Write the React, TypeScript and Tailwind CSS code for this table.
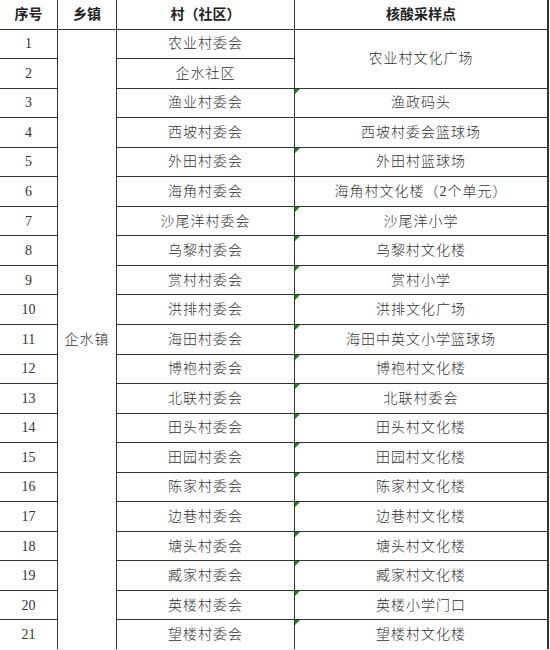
import React from "react";

const rows: { n: number; village: string; site?: string; tri?: boolean }[] = [
  { n: 1, village: "农业村委会" },
  { n: 2, village: "企水社区" },
  { n: 3, village: "渔业村委会", site: "渔政码头", tri: true },
  { n: 4, village: "西坡村委会", site: "西坡村委会篮球场" },
  { n: 5, village: "外田村委会", site: "外田村篮球场", tri: true },
  { n: 6, village: "海角村委会", site: "海角村文化楼（2个单元）" },
  { n: 7, village: "沙尾洋村委会", site: "沙尾洋小学", tri: true },
  { n: 8, village: "乌黎村委会", site: "乌黎村文化楼", tri: true },
  { n: 9, village: "赏村村委会", site: "赏村小学", tri: true },
  { n: 10, village: "洪排村委会", site: "洪排文化广场", tri: true },
  { n: 11, village: "海田村委会", site: "海田中英文小学篮球场", tri: true },
  { n: 12, village: "博袍村委会", site: "博袍村文化楼", tri: true },
  { n: 13, village: "北联村委会", site: "北联村委会", tri: true },
  { n: 14, village: "田头村委会", site: "田头村文化楼", tri: true },
  { n: 15, village: "田园村委会", site: "田园村文化楼", tri: true },
  { n: 16, village: "陈家村委会", site: "陈家村文化楼", tri: true },
  { n: 17, village: "边巷村委会", site: "边巷村文化楼", tri: true },
  { n: 18, village: "塘头村委会", site: "塘头村文化楼", tri: true },
  { n: 19, village: "臧家村委会", site: "臧家村文化楼", tri: true },
  { n: 20, village: "英楼村委会", site: "英楼小学门口", tri: true },
  { n: 21, village: "望楼村委会", site: "望楼村文化楼", tri: true },
];

const font = {
  fontFamily: '"Liberation Serif", "Noto Sans CJK SC", serif',
};

function Tri() {
  return (
    <span className="absolute left-0 top-0 h-0 w-0 border-l-[5px] border-b-[5px] border-l-[#138a13] border-b-transparent" />
  );
}

const cell = "flex items-center justify-center bg-white text-[14px] font-light tracking-[1px] text-[#333]";

export default function App() {
  return (
    <div className="w-[550px] h-[650px] bg-white" style={font}>
      <div className="grid h-[649px] w-[549px] grid-cols-[57px_58px_177px_252px] grid-rows-[repeat(22,minmax(0,1fr))] gap-px bg-[#333]">
        <div className="flex items-center justify-center bg-white text-[14px] font-bold text-[#222]">序号</div>
        <div className="flex items-center justify-center bg-white text-[14px] font-bold text-[#222]">乡镇</div>
        <div className="flex items-center justify-center bg-white text-[14px] font-bold text-[#222]">村（社区）</div>
        <div className="flex items-center justify-center bg-white text-[14px] font-bold text-[#222]">核酸采样点</div>
        {rows.map((r, i) => (
          <React.Fragment key={r.n}>
            <div className="flex items-center justify-center bg-white text-[14px] text-[#333]">{r.n}</div>
            {i === 0 && <div className={`row-span-21 ${cell}`}>企水镇</div>}
            <div className={cell}>{r.village}</div>
            {i === 0 && <div className={`row-span-2 ${cell}`}>农业村文化广场</div>}
            {r.site && (
              <div className={`relative ${cell}`}>
                {r.tri && <Tri />}
                {r.site}
              </div>
            )}
          </React.Fragment>
        ))}
      </div>
    </div>
  );
}
